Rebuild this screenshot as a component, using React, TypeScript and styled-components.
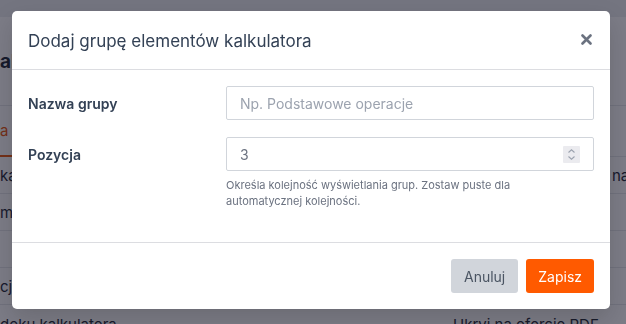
import React from "react";
import styled, { createGlobalStyle } from "styled-components";

const GlobalStyle = createGlobalStyle`
  html, body {
    margin: 0;
    padding: 0;
    background: #ffffff;
    font-family: Inter, "Noto Sans", sans-serif;
    overflow: hidden;
  }
  * { box-sizing: border-box; }
`;

// --- page behind the dialog ---
const Page = styled.div`
  width: 626px;
  height: 324px;
  overflow: hidden;
  color: #1f2937;
`;

const TopBar = styled.div`
  height: 17px;
  background: #eeeff2;
`;

const Heading = styled.div`
  height: 89px;
  display: flex;
  align-items: center;
  font-size: 19px;
  font-weight: 700;
  border-bottom: 1px solid #e5e7eb;
`;

const Tabs = styled.div`
  height: 51px;
  display: flex;
  align-items: stretch;
  border-bottom: 1px solid #e5e7eb;
`;

const Tab = styled.div`
  display: flex;
  align-items: center;
  width: 60px;
  font-size: 15px;
  color: #ea580c;
  border-bottom: 2px solid #ea580c;
  margin-bottom: -1px;
`;

const Row = styled.div<{ $h?: number }>`
  height: ${(p) => p.$h ?? 37}px;
  display: grid;
  grid-template-columns: 453px 159px 1fr;
  align-items: center;
  border-bottom: 1px solid #e5e7eb;
  font-size: 15px;
  white-space: nowrap;
`;

const Cell = styled.div`
  overflow: visible;
`;

// --- dialog ---
const Overlay = styled.div`
  position: fixed;
  inset: 0;
  background: rgba(17, 17, 34, 0.55);
  display: flex;
  align-items: flex-start;
  padding: 11px 0 0 12px;
`;

const Dialog = styled.div`
  width: 598px;
  background: #ffffff;
  border-radius: 5px;
  box-shadow: 0 10px 25px rgba(0, 0, 0, 0.15);
  overflow: hidden;
`;

const Header = styled.div`
  height: 59px;
  display: flex;
  align-items: center;
  justify-content: space-between;
  padding: 2px 16px 0 16px;
  border-bottom: 1px solid #dcdde1;
`;

const Title = styled.h2`
  margin: 0;
  font-size: 17px;
  font-weight: 400;
  color: #334155;
`;

const CloseButton = styled.button`
  border: 0;
  background: none;
  padding: 0;
  width: 14px;
  height: 14px;
  display: flex;
  align-items: center;
  justify-content: center;
  cursor: pointer;
  margin-top: -4px;
  margin-right: 1px;
`;

const Body = styled.div`
  padding: 16px 16px 33px 16px;
  display: flex;
  flex-direction: column;
  gap: 17px;
`;

const Field = styled.div`
  display: grid;
  grid-template-columns: 198px 1fr;
  align-items: start;
`;

const Label = styled.label`
  height: 34px;
  display: flex;
  align-items: center;
  font-size: 14px;
  font-weight: 600;
  color: #334155;
`;

const Control = styled.div`
  position: relative;
`;

const Input = styled.input`
  width: 100%;
  height: 34px;
  border: 1px solid #d1d5db;
  border-radius: 2px;
  padding: 0 13px;
  font-family: inherit;
  font-size: 14px;
  color: #6b7280;
  outline: none;
  appearance: textfield;
  &::placeholder {
    color: #9ca3af;
  }
`;

const Spinner = styled.span`
  position: absolute;
  right: 14px;
  top: 9px;
  width: 17px;
  height: 17px;
  background: #ebebef;
  border-radius: 1px;
  display: flex;
  align-items: center;
  justify-content: center;
`;

const Help = styled.p`
  margin: 6px 0 0 0;
  max-width: 320px;
  font-size: 11px;
  line-height: 16px;
  color: #6b7280;
`;

const Footer = styled.div`
  border-top: 1px solid #dcdde1;
  padding: 16px;
  display: flex;
  justify-content: flex-end;
  gap: 8px;
`;

const Button = styled.button<{ $primary?: boolean }>`
  height: 34px;
  padding: 0 ${(p) => (p.$primary ? 12 : 13)}px;
  border: 0;
  border-radius: 3px;
  font-family: inherit;
  font-size: 14px;
  background: ${(p) => (p.$primary ? "#ff5a00" : "#d1d5db")};
  color: ${(p) => (p.$primary ? "#ffffff" : "#4b5563")};
  cursor: pointer;
`;

const App: React.FC = () => {
  return (
    <>
      <GlobalStyle />
      <Page>
        <TopBar />
        <Heading>al</Heading>
        <Tabs>
          <Tab>a</Tab>
        </Tabs>
        <Row>
          <Cell>kal</Cell>
          <Cell />
          <Cell>na</Cell>
        </Row>
        <Row>
          <Cell>m</Cell>
        </Row>
        <Row>
          <Cell />
        </Row>
        <Row>
          <Cell>cja</Cell>
        </Row>
        <Row $h={40}>
          <Cell>doku kalkulatora</Cell>
          <Cell>Ukryj na ofercie PDF</Cell>
        </Row>
      </Page>

      <Overlay>
        <Dialog>
          <Header>
            <Title>Dodaj grupę elementów kalkulatora</Title>
            <CloseButton aria-label="Zamknij">
              <svg width="11" height="11" viewBox="0 0 11 11">
                <path d="M1.5 1.5 L9.5 9.5 M9.5 1.5 L1.5 9.5" stroke="#6b7280" strokeWidth="2.6" strokeLinecap="round" />
              </svg>
            </CloseButton>
          </Header>

          <Body>
            <Field>
              <Label>Nazwa grupy</Label>
              <Control>
                <Input placeholder="Np. Podstawowe operacje" />
              </Control>
            </Field>
            <Field>
              <Label>Pozycja</Label>
              <Control>
                <Input defaultValue="3" />
                <Spinner>
                  <svg width="9" height="13" viewBox="0 0 9 13">
                    <path d="M1.5 4.5 L4.5 1.8 L7.5 4.5 M1.5 8.5 L4.5 11.2 L7.5 8.5" stroke="#9ca3af" strokeWidth="1.1" fill="none" />
                  </svg>
                </Spinner>
                <Help>
                  Określa kolejność wyświetlania grup. Zostaw puste dla automatycznej kolejności.
                </Help>
              </Control>
            </Field>
          </Body>

          <Footer>
            <Button>Anuluj</Button>
            <Button $primary>Zapisz</Button>
          </Footer>
        </Dialog>
      </Overlay>
    </>
  );
};

export default App;
